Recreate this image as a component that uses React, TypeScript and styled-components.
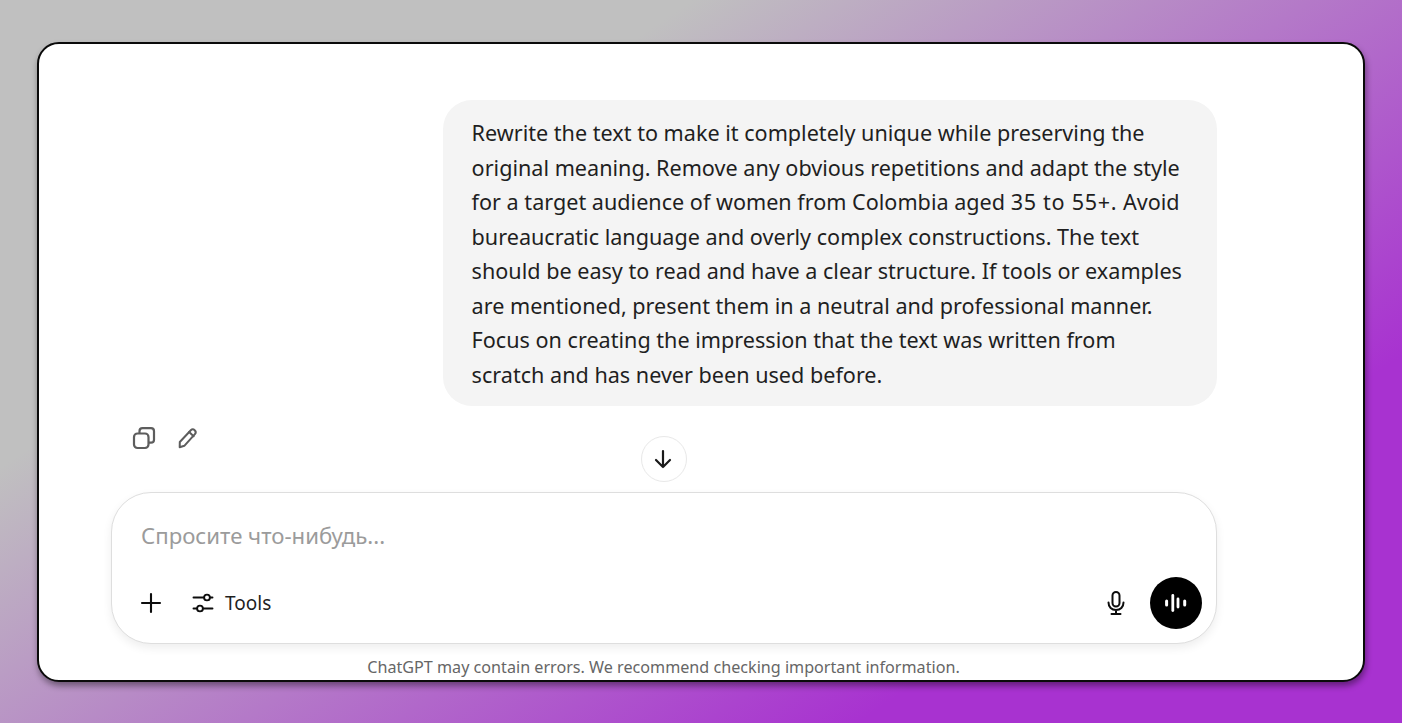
import React from "react";
import styled, { createGlobalStyle } from "styled-components";

const Global = createGlobalStyle`
  html, body { margin: 0; padding: 0; height: 100%; }
  #root { height: 100%; }
  * { box-sizing: border-box; }
`;

const Page = styled.div`
  width: 1402px;
  height: 723px;
  padding: 42px 37px 41px 37px;
  background: linear-gradient(146deg, #c0c0c0 28%, #a832d0 78%);
  font-family: "Noto Sans", "Open Sans", sans-serif;
  overflow: hidden;
`;

const Card = styled.main`
  position: relative;
  height: 640px;
  background: #fff;
  border: 2px solid #0a0a0a;
  border-radius: 22px;
  box-shadow: 1px 4px 6px rgba(0, 0, 0, 0.4);
  padding: 56px 146px 0 72px;
  display: flex;
  flex-direction: column;
`;

const Bubble = styled.div`
  align-self: flex-end;
  width: 774px;
  height: 306px;
  padding: 16px 28px 16px 28.600px;
  background: #f4f4f4;
  border-radius: 29px;
  color: #1f1f1f;
  font-size: 21.600px;
  line-height: 34.500px;
`;

const Line = styled.div`
  white-space: nowrap;
`;

const Numerals = styled.span`
  letter-spacing: 0.700px;
`;

const Actions = styled.div`
  height: 86px;
  padding: 20px 0 0 21px;
  display: flex;
  gap: 21px;
  color: #5d5d5d;
`;

const ScrollButton = styled.button`
  position: absolute;
  left: 602px;
  top: 392px;
  width: 46px;
  height: 46px;
  padding: 0;
  border: 1px solid #e8e8e8;
  border-radius: 50%;
  background: #fff;
  color: #1a1a1a;
  display: flex;
  align-items: center;
  justify-content: center;
`;

const Composer = styled.section`
  height: 152px;
  border: 1px solid #dedede;
  border-radius: 40px;
  background: #fff;
  box-shadow: 0 4px 10px rgba(0, 0, 0, 0.07);
  padding: 28px 14px 14px 29px;
  display: flex;
  flex-direction: column;
  justify-content: space-between;
`;

const Placeholder = styled.div`
  color: #9b9b9b;
  font-size: 22.200px;
  line-height: 30px;
`;

const ToolRow = styled.div`
  display: flex;
  align-items: center;
  height: 52px;
  margin-left: -1px;
`;

const IconWrap = styled.span<{ $mr?: number }>`
  display: flex;
  color: #0d0d0d;
  margin-right: ${(p) => p.$mr ?? 0}px;
`;

const ToolsLabel = styled.span`
  color: #1f1f1f;
  font-size: 19px;
  flex: 1;
`;

const VoiceButton = styled.div`
  width: 52px;
  height: 52px;
  border-radius: 50%;
  background: #000;
  color: #fff;
  display: flex;
  align-items: center;
  justify-content: center;
`;

const Disclaimer = styled.div`
  text-align: center;
  color: #666;
  font-size: 16.150px;
  line-height: 22px;
  margin-top: 12px;
  padding-right: 1px;
`;

export default function App() {
  return (
    <Page>
      <Global />
      <Card>
        <Bubble>
          <Line>Rewrite the text to make it completely unique while preserving the</Line>
          <Line>original meaning. Remove any obvious repetitions and adapt the style</Line>
          <Line>
            for a target audience of women from Colombia aged <Numerals>35 to 55+.</Numerals> Avoid
          </Line>
          <Line>bureaucratic language and overly complex constructions. The text</Line>
          <Line>should be easy to read and have a clear structure. If tools or examples</Line>
          <Line>are mentioned, present them in a neutral and professional manner.</Line>
          <Line>Focus on creating the impression that the text was written from</Line>
          <Line>scratch and has never been used before.</Line>
        </Bubble>
        <Actions>
          <svg width="24" height="24" viewBox="0 0 24 24" fill="none" stroke="currentColor" strokeWidth="2.200" strokeLinejoin="round">
            <rect x="2" y="7.500" width="14.500" height="14.500" rx="3.500" />
            <path d="M7.500 7.300V5.200a3 3 0 0 1 3-3h8.500a3 3 0 0 1 3 3v8.500a3 3 0 0 1-3 3h-2.300" />
          </svg>
          <svg width="22" height="24" viewBox="0 0 22 24" fill="none" stroke="currentColor" strokeWidth="2" strokeLinejoin="round" strokeLinecap="round">
            <path d="M2.800 16 13.800 4.300a2.800 2.800 0 0 1 3.900-.1 2.800 2.800 0 0 1 .2 3.900L7.300 19.800l-4.600 1.400z" />
            <path d="M12.200 6l4.400 4.200" />
          </svg>
        </Actions>
        <ScrollButton>
          <svg width="24" height="24" viewBox="0 0 24 24" fill="none" stroke="currentColor" strokeWidth="2.200" strokeLinecap="round" strokeLinejoin="round">
            <path d="M11 4v16M4 13l7 7 7-7" />
          </svg>
        </ScrollButton>
        <Composer>
          <Placeholder>Спросите что-нибудь...</Placeholder>
          <ToolRow>
            <IconWrap $mr={29}>
              <svg width="22" height="22" viewBox="0 0 22 22" fill="none" stroke="currentColor" strokeWidth="2.100" strokeLinecap="round">
                <path d="M11 2v18M2 11h18" />
              </svg>
            </IconWrap>
            <IconWrap $mr={10}>
              <svg width="24" height="24" viewBox="0 0 24 24" fill="none" stroke="currentColor" strokeWidth="1.900" strokeLinecap="round">
                <path d="M2.500 6.500H13M19 6.500h2.500M2.500 17.500H6M12 17.500h9.500" />
                <circle cx="16" cy="6.500" r="2.900" />
                <circle cx="9" cy="17.500" r="2.900" />
              </svg>
            </IconWrap>
            <ToolsLabel>Tools</ToolsLabel>
            <IconWrap $mr={21}>
              <svg width="26" height="26" viewBox="0 0 26 26" fill="none" stroke="currentColor" strokeWidth="2" strokeLinecap="round">
                <rect x="9.500" y="2" width="7" height="14.500" rx="3.500" />
                <path d="M5.500 12.500c0 4.500 3.200 7.500 7.500 7.500s7.500-3 7.500-7.500M13 20v3.500M8.500 24h9" />
              </svg>
            </IconWrap>
            <VoiceButton>
              <svg width="24" height="24" viewBox="0 0 24 24" fill="currentColor">
                <rect x="1.100" y="8.500" width="3" height="7" rx="1.500" />
                <rect x="7.400" y="3" width="2.800" height="18" rx="1.400" />
                <rect x="12.600" y="6.500" width="2.800" height="11" rx="1.400" />
                <rect x="19.200" y="8.500" width="3" height="7" rx="1.500" />
              </svg>
            </VoiceButton>
          </ToolRow>
        </Composer>
        <Disclaimer>ChatGPT may contain errors. We recommend checking important information.</Disclaimer>
      </Card>
    </Page>
  );
}
